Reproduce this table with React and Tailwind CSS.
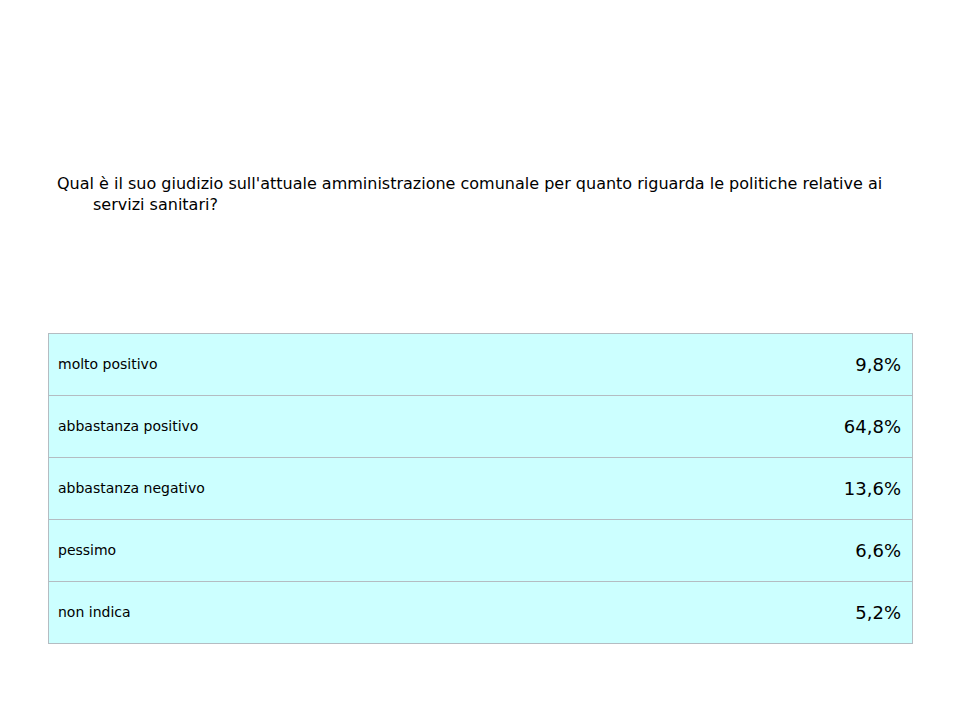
import React from "react";

const rows = [
  { label: "molto positivo", value: "9,8%" },
  { label: "abbastanza positivo", value: "64,8%" },
  { label: "abbastanza negativo", value: "13,6%" },
  { label: "pessimo", value: "6,6%" },
  { label: "non indica", value: "5,2%" },
];

const font = { fontFamily: '"DejaVu Sans", Verdana, sans-serif' };

const App = () => {
  return (
    <div className="w-[960px] h-[720px] bg-white text-black" style={font}>
      <div className="pt-[173px] pl-[57px]">
        <p className="w-[845px] text-[16px] leading-[21px] pl-[36px] -indent-[36px]">
          Qual è il suo giudizio sull'attuale amministrazione comunale per quanto riguarda le politiche relative ai servizi sanitari?
        </p>
      </div>
      <div className="mt-[118px] ml-[48px] w-[865px] border border-[#b4bcc2] bg-[#ccffff]">
        {rows.map((row, i) => (
          <div
            key={row.label}
            className={
              i === 0
                ? "flex items-center justify-between h-[61px] pl-[9px] pr-[11px]"
                : "flex items-center justify-between h-[62px] pl-[9px] pr-[11px] border-t border-[#b4bcc2]"
            }
          >
            <span className="text-[14px]">{row.label}</span>
            <span className="text-[18px]">{row.value}</span>
          </div>
        ))}
      </div>
    </div>
  );
};

export default App;
